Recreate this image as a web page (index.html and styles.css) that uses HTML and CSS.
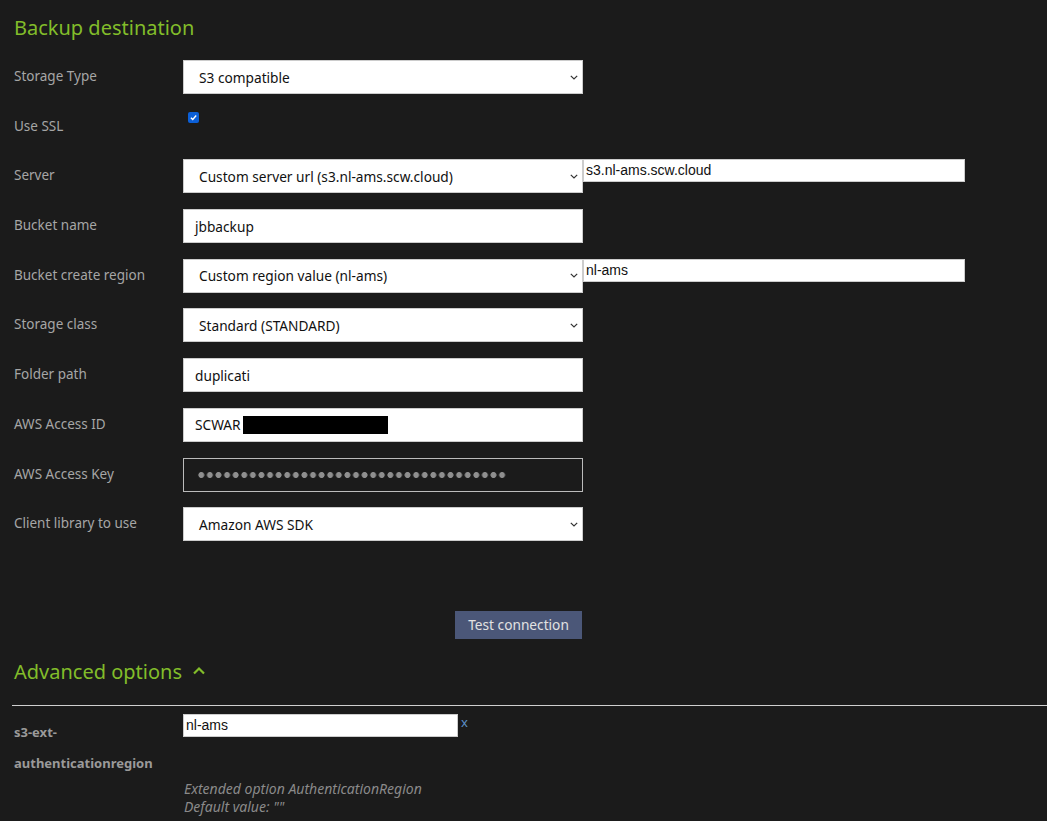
FILE: index.html
```html
<!DOCTYPE html>
<html>
<head>
<meta charset="utf-8">
<link rel="stylesheet" href="styles.css">
</head>
<body>
<div class="page">
  <h2 class="section-title">Backup destination</h2>

  <div class="form">
    <div class="row">
      <label class="lbl">Storage Type</label>
      <div class="sel"><span class="sel-text">S3 compatible</span><svg class="chev" viewBox="0 0 8 5" width="8" height="5"><path d="M0.8 0.8 L4 4 L7.2 0.8" fill="none" stroke="#333" stroke-width="1.2"/></svg></div>
    </div>

    <div class="row">
      <label class="lbl">Use SSL</label>
      <div class="check-wrap"><span class="checkbox"><svg viewBox="0 0 12 12" width="9" height="9"><path d="M2.5 6.3 L5 8.6 L9.6 3.4" fill="none" stroke="#fff" stroke-width="1.8"/></svg></span></div>
    </div>

    <div class="row">
      <label class="lbl">Server</label>
      <div class="sel"><span class="sel-text">Custom server url (s3.nl-ams.scw.cloud)</span><svg class="chev" viewBox="0 0 8 5" width="8" height="5"><path d="M0.8 0.8 L4 4 L7.2 0.8" fill="none" stroke="#333" stroke-width="1.2"/></svg></div>
      <div class="extra">s3.nl-ams.scw.cloud</div>
    </div>

    <div class="row">
      <label class="lbl">Bucket name</label>
      <div class="inp">jbbackup</div>
    </div>

    <div class="row">
      <label class="lbl">Bucket create region</label>
      <div class="sel"><span class="sel-text">Custom region value (nl-ams)</span><svg class="chev" viewBox="0 0 8 5" width="8" height="5"><path d="M0.8 0.8 L4 4 L7.2 0.8" fill="none" stroke="#333" stroke-width="1.2"/></svg></div>
      <div class="extra">nl-ams</div>
    </div>

    <div class="row">
      <label class="lbl">Storage class</label>
      <div class="sel"><span class="sel-text">Standard (STANDARD)</span><svg class="chev" viewBox="0 0 8 5" width="8" height="5"><path d="M0.8 0.8 L4 4 L7.2 0.8" fill="none" stroke="#333" stroke-width="1.2"/></svg></div>
    </div>

    <div class="row">
      <label class="lbl">Folder path</label>
      <div class="inp">duplicati</div>
    </div>

    <div class="row">
      <label class="lbl">AWS Access ID</label>
      <div class="inp">SCWAR<span class="redact"></span></div>
    </div>

    <div class="row">
      <label class="lbl">AWS Access Key</label>
      <div class="inp inp-dark"><span class="dots"></span></div>
    </div>

    <div class="row">
      <label class="lbl">Client library to use</label>
      <div class="sel"><span class="sel-text">Amazon AWS SDK</span><svg class="chev" viewBox="0 0 8 5" width="8" height="5"><path d="M0.8 0.8 L4 4 L7.2 0.8" fill="none" stroke="#333" stroke-width="1.2"/></svg></div>
    </div>

    <div class="btn-row">
      <button class="btn">Test connection</button>
    </div>
  </div>

  <h2 class="section-title adv">Advanced options <svg class="up" viewBox="0 0 14 9" width="14" height="9"><path d="M2 7.5 L7 2.5 L12 7.5" fill="none" stroke="#82bd2a" stroke-width="2.2"/></svg></h2>
  <div class="hr"></div>

  <div class="adv-row">
    <label class="adv-lbl">s3-ext-authenticationregion</label>
    <div class="adv-ctrl">
      <div class="adv-line"><div class="adv-inp">nl-ams</div><span class="x">x</span></div>
      <div class="desc">Extended option AuthenticationRegion<br>Default value: ""</div>
    </div>
  </div>
</div>
</body>
</html>
```

FILE: styles.css
```css
html, body {
  margin: 0;
  padding: 0;
  background: #1b1b1b;
}
.page {
  padding: 0 0 0 14px;
  font-family: "Noto Sans", "Open Sans", sans-serif;
  color: #a6a6a6;
}
.section-title {
  margin: 0;
  padding-top: 15px;
  height: 60px;
  box-sizing: border-box;
  font-weight: 400;
  font-size: 20px;
  line-height: 26px;
  color: #82bd2a;
}
.form {
  display: flex;
  flex-direction: column;
}
.row {
  display: flex;
  align-items: flex-start;
  height: 49.7px;
}
.lbl {
  width: 169px;
  flex: none;
  font-size: 13.5px;
  line-height: 20px;
  padding-top: 6px;
  color: #a6a6a6;
}
.sel, .inp {
  width: 400px;
  height: 34px;
  box-sizing: border-box;
  background: #fff;
  border: 1px solid #ccc;
  display: flex;
  align-items: center;
  font-size: 13.7px;
  color: #111;
  flex: none;
}
.sel {
  padding: 0 4px 0 15px;
  justify-content: space-between;
}
.inp {
  padding: 0 11px;
}
.inp-dark {
  background: #1b1b1b;
  border: 1px solid #bbb;
  padding-left: 13px;
}
.dots {
  display: block;
  width: 310px;
  height: 8px;
  background-image: radial-gradient(circle, #8f8f8f 2.6px, rgba(143,143,143,0) 3.3px);
  background-size: 8.6px 8px;
  background-repeat: repeat-x;
}
.redact {
  display: inline-block;
  width: 145px;
  height: 18px;
  background: #000;
  margin-left: 2px;
}
.chev {
  flex: none;
}
.check-wrap {
  padding-top: 2px;
  padding-left: 5px;
}
.checkbox {
  display: flex;
  align-items: center;
  justify-content: center;
  width: 11px;
  height: 11px;
  background: #0b5fd7;
  border-radius: 2px;
}
.extra {
  width: 382px;
  height: 23px;
  box-sizing: border-box;
  background: #fff;
  border: 1px solid #ccc;
  font-family: "Liberation Sans", Arial, sans-serif;
  font-size: 14px;
  line-height: 21px;
  color: #111;
  padding-left: 2px;
  flex: none;
}
.btn-row {
  display: flex;
  padding-left: 441px;
  padding-top: 54px;
  height: 28px;
}
.btn {
  width: 127px;
  height: 28px;
  background: #4b5778;
  color: #e2e2e2;
  border: none;
  font-family: "Noto Sans", "Open Sans", sans-serif;
  font-size: 13.7px;
  padding: 0;
  margin: 0;
}
.adv {
  padding-top: 20px;
  height: auto;
  display: flex;
  align-items: center;
  gap: 10px;
}
.up {
  margin-top: -3px;
}
.hr {
  height: 1px;
  background: #cfcfcf;
  margin: 20px 0 0 -2px;
}
.adv-row {
  display: flex;
  padding-top: 8px;
}
.adv-lbl {
  width: 150px;
  margin-right: 19px;
  flex: none;
  font-weight: 700;
  font-size: 13px;
  line-height: 31px;
  padding-top: 3px;
  color: #9a9a9a;
}
.adv-line {
  display: flex;
  align-items: flex-start;
}
.adv-inp {
  width: 275px;
  height: 23px;
  box-sizing: border-box;
  background: #fff;
  border: 1px solid #ccc;
  font-family: "Liberation Sans", Arial, sans-serif;
  font-size: 14px;
  line-height: 21px;
  color: #111;
  padding-left: 2px;
}
.x {
  color: #5b8fc7;
  font-size: 13px;
  line-height: 16px;
  margin-left: 3px;
}
.desc {
  font-style: italic;
  font-size: 14px;
  line-height: 18px;
  color: #8a8a8a;
  padding-top: 43px;
  padding-left: 1px;
}
```
